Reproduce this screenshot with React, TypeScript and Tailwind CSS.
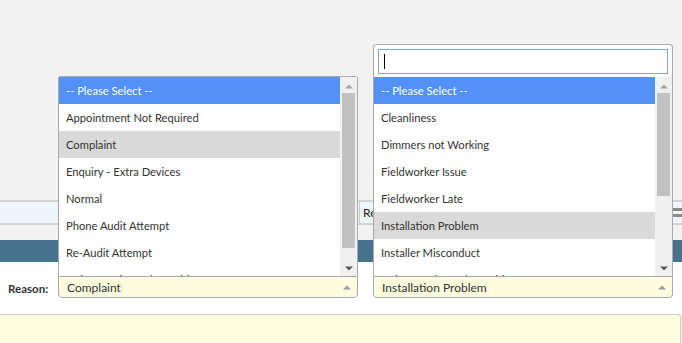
import React from "react";

const leftItems = [
  "-- Please Select --",
  "Appointment Not Required",
  "Complaint",
  "Enquiry - Extra Devices",
  "Normal",
  "Phone Audit Attempt",
  "Re-Audit Attempt",
  "Unit Affecting Other Wiring",
];

const rightItems = [
  "-- Please Select --",
  "Cleanliness",
  "Dimmers not Working",
  "Fieldworker Issue",
  "Fieldworker Late",
  "Installation Problem",
  "Installer Misconduct",
  "Unit Affecting Other Wiring",
];

function Triangle({ up, color }: { up?: boolean; color: string }) {
  return (
    <svg width="8" height="5" viewBox="0 0 8 5" className="block">
      {up ? (
        <path d="M0 4.5 L4 0.5 L8 4.5 Z" fill={color} />
      ) : (
        <path d="M0 0.5 L8 0.5 L4 4.5 Z" fill={color} />
      )}
    </svg>
  );
}

function ListBox({
  items,
  hover,
  thumbTop,
  thumbHeight,
}: {
  items: string[];
  hover: number;
  thumbTop: number;
  thumbHeight: number;
}) {
  return (
    <div className="flex h-[199px] bg-white">
      <div className="w-[281px] h-[199px] overflow-hidden">
        {items.map((t, i) => (
          <div
            key={t}
            className={
              "h-[27px] leading-[27px] pl-[7px] text-[11.2px] whitespace-nowrap " +
              (i === 0
                ? "bg-[#5292f6] text-white"
                : i === hover
                ? "bg-[#d9d9d9] text-[#333]"
                : "text-[#333]")
            }
          >
            {t}
          </div>
        ))}
      </div>
      <div className="w-[17px] h-[199px] bg-[#f0f0f0] relative">
        <div className="absolute left-[5px] top-[7px]">
          <Triangle up color="#a3a3a3" />
        </div>
        <div
          className="absolute left-[2px] w-[13px] bg-[#c1c1c1]"
          style={{ top: thumbTop, height: thumbHeight }}
        />
        <div className="absolute left-[5px] top-[189px]">
          <Triangle color="#5a5a5a" />
        </div>
      </div>
    </div>
  );
}

function SelectBox({ value }: { value: string }) {
  return (
    <div className="h-[22px] w-[300px] border border-[#aaaaaa] rounded-b-[4px] bg-[#fdfcdf] flex items-center justify-between pl-[8px] pr-[6px]">
      <span className="text-[12px] text-[#333] pt-[2px] whitespace-nowrap">{value}</span>
      <Triangle up color="#9a9a9a" />
    </div>
  );
}

export default function App() {
  return (
    <div className="w-[682px] h-[343px] overflow-hidden bg-[#f2f2f2] relative font-['Lato',sans-serif]">
      <div className="h-[200px]" />
      <div className="h-[25px] border-y-2 border-[#d2d2d2] bg-[#eef5fd] flex items-center">
        <div className="ml-[359px] h-full border-l border-[#c8c8c8] pl-[3px] flex items-center text-[12px] text-[#222]">
          Re
        </div>
        <div className="ml-auto mr-[-4px] flex flex-col gap-[3px]">
          <div className="w-[14px] h-[3px] bg-[#8a8a8a] rounded-sm" />
          <div className="w-[14px] h-[3px] bg-[#8a8a8a] rounded-sm" />
        </div>
      </div>
      <div className="h-[15px]" />
      <div className="h-[22px] bg-[#47728b]" />
      <div className="h-[52px] bg-white pt-[14px]">
        <div className="flex items-start">
          <div className="w-[58px] pl-[8px] h-[22px] flex items-center pt-[3px] text-[11.5px] font-bold text-[#333]">
            Reason:
          </div>
          <div className="relative">
            <div className="absolute bottom-full left-0 w-[300px] border border-b-0 border-[#aaaaaa] rounded-t-[3px] bg-white">
              <ListBox items={leftItems} hover={2} thumbTop={16} thumbHeight={155} />
            </div>
            <SelectBox value="Complaint" />
          </div>
          <div className="relative ml-[15px]">
            <div className="absolute bottom-full left-0 w-[300px] border border-b-0 border-[#aaaaaa] rounded-t-[4px] bg-white">
              <div className="p-[4px] pb-[3px]">
                <div className="h-[25px] border border-[#7ea6d8] bg-white flex items-center pl-[5px]">
                  <div className="w-[1px] h-[15px] bg-black" />
                </div>
              </div>
              <ListBox items={rightItems} hover={5} thumbTop={16} thumbHeight={103} />
            </div>
            <SelectBox value="Installation Problem" />
          </div>
        </div>
      </div>
      <div className="h-[29px] w-[681px] bg-[#fefde0] border-t border-r border-[#cfcfcf] rounded-tr-[4px]" />
    </div>
  );
}
